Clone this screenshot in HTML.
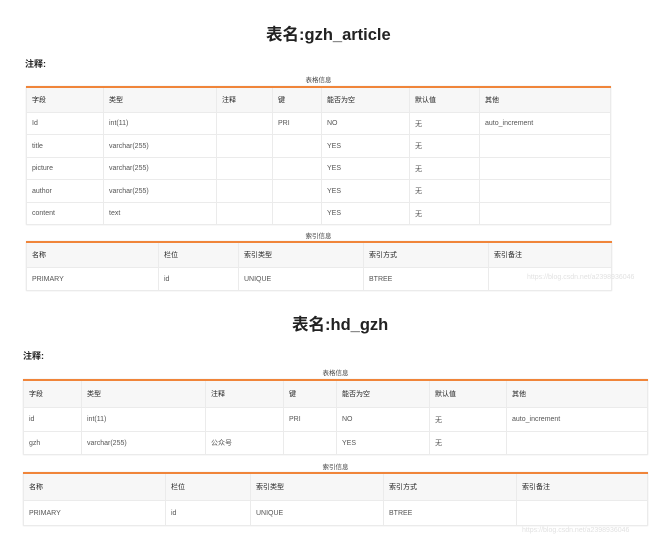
<!DOCTYPE html>
<html><head><meta charset="utf-8"><style>
body{margin:0;width:659px;height:538px;background:#fff;position:relative;overflow:hidden;font-family:"Liberation Sans","Noto Sans CJK SC",sans-serif;color:#555}
.a{position:absolute}
.t{font-size:16.5px;font-weight:bold;color:#222;white-space:nowrap;line-height:20px}
.n{font-size:9px;font-weight:bold;color:#222}
.cap{font-size:6.5px;color:#444;text-align:center;line-height:8px}
table{border-collapse:collapse;table-layout:fixed;border-top:2px solid #f0853a;box-shadow:0 0 1px #ddd}
td{border:1px solid #ebebeb;font-size:7px;padding:1px 0 0 5px;white-space:nowrap;overflow:hidden;color:#555}
tr.h td{background:#f7f7f7;color:#222}
.w{font-size:7px;color:#e2e2e2;white-space:nowrap}
</style></head><body>
<div class="a t" style="left:266px;top:25px">表名:gzh_article</div>
<div class="a n" style="left:25px;top:57px">注释:</div>
<div class="a cap" style="left:26px;width:585px;top:77px">表格信息</div>
<table class="a" style="left:26px;top:86px;width:585px">
<colgroup><col style="width:77px"><col style="width:113px"><col style="width:56px"><col style="width:49px"><col style="width:88px"><col style="width:70px"><col></colgroup>
<tr class="h" style="height:25px"><td>字段</td><td>类型</td><td>注释</td><td>键</td><td>能否为空</td><td>默认值</td><td>其他</td></tr>
<tr style="height:22.5px"><td>Id</td><td>int(11)</td><td></td><td>PRI</td><td>NO</td><td>无</td><td>auto_increment</td></tr>
<tr style="height:22.5px"><td>title</td><td>varchar(255)</td><td></td><td></td><td>YES</td><td>无</td><td></td></tr>
<tr style="height:22.5px"><td>picture</td><td>varchar(255)</td><td></td><td></td><td>YES</td><td>无</td><td></td></tr>
<tr style="height:22.5px"><td>author</td><td>varchar(255)</td><td></td><td></td><td>YES</td><td>无</td><td></td></tr>
<tr style="height:22.5px"><td>content</td><td>text</td><td></td><td></td><td>YES</td><td>无</td><td></td></tr>
</table>
<div class="a cap" style="left:26px;width:585px;top:233px">索引信息</div>
<table class="a" style="left:26px;top:241px;width:586px">
<colgroup><col style="width:132px"><col style="width:80px"><col style="width:125px"><col style="width:125px"><col></colgroup>
<tr class="h" style="height:25px"><td>名称</td><td>栏位</td><td>索引类型</td><td>索引方式</td><td>索引备注</td></tr>
<tr style="height:23px"><td>PRIMARY</td><td>id</td><td>UNIQUE</td><td>BTREE</td><td></td></tr>
</table>
<div class="a w" style="left:527px;top:274px">https://blog.csdn.net/a2398936046</div>

<div class="a t" style="left:292px;top:315px">表名:hd_gzh</div>
<div class="a n" style="left:23px;top:349px">注释:</div>
<div class="a cap" style="left:23px;width:625px;top:370px">表格信息</div>
<table class="a" style="left:23px;top:379px;width:625px">
<colgroup><col style="width:58px"><col style="width:124px"><col style="width:78px"><col style="width:53px"><col style="width:93px"><col style="width:77px"><col></colgroup>
<tr class="h" style="height:27px"><td>字段</td><td>类型</td><td>注释</td><td>键</td><td>能否为空</td><td>默认值</td><td>其他</td></tr>
<tr style="height:24px"><td>id</td><td>int(11)</td><td></td><td>PRI</td><td>NO</td><td>无</td><td>auto_increment</td></tr>
<tr style="height:23px"><td>gzh</td><td>varchar(255)</td><td>公众号</td><td></td><td>YES</td><td>无</td><td></td></tr>
</table>
<div class="a cap" style="left:23px;width:625px;top:464px">索引信息</div>
<table class="a" style="left:23px;top:472px;width:625px">
<colgroup><col style="width:142px"><col style="width:85px"><col style="width:133px"><col style="width:133px"><col></colgroup>
<tr class="h" style="height:27px"><td>名称</td><td>栏位</td><td>索引类型</td><td>索引方式</td><td>索引备注</td></tr>
<tr style="height:25px"><td>PRIMARY</td><td>id</td><td>UNIQUE</td><td>BTREE</td><td></td></tr>
</table>
<div class="a w" style="left:522px;top:527px">https://blog.csdn.net/a2398936046</div>
</body></html>
